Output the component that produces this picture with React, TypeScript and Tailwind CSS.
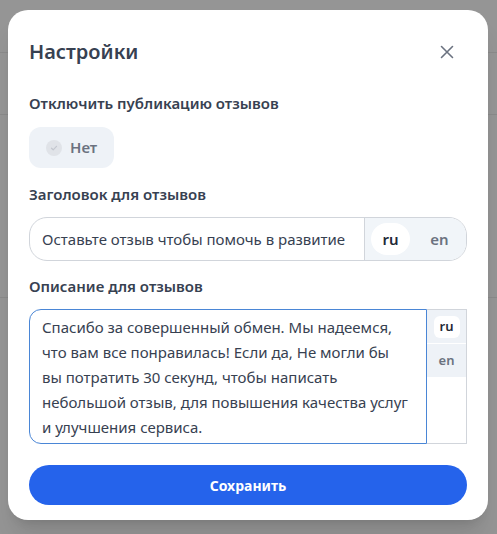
import React from "react";

const font = { fontFamily: '"Noto Sans", "Open Sans", Arial, sans-serif' };

export default function App() {
  const lines = [
    "Спасибо за совершенный обмен. Мы надеемся,",
    "что вам все понравилась! Если да, Не могли бы",
    "вы потратить 30 секунд, чтобы написать",
    "небольшой отзыв, для повышения качества услуг",
    "и улучшения сервиса.",
  ];
  return (
    <div className="relative w-[497px] h-[534px] overflow-hidden bg-[#959595]" style={font}>
      <div className="absolute left-0 right-0 top-[52px] h-px bg-[#8a8a8a]" />
      <div className="absolute left-0 right-0 top-[114px] h-px bg-[#8a8a8a]" />
      <div className="absolute left-0 right-0 top-[297px] h-px bg-[#8a8a8a]" />
      <div className="absolute left-[8px] top-[10px] w-[480px] h-[510px] bg-white rounded-[20px] shadow-xl px-[21px] pt-[28px] flex flex-col">
        <div className="flex items-center justify-between h-[28px]">
          <div className="text-[20px] leading-[28px] font-semibold text-[#374151]">Настройки</div>
          <svg width="14" height="14" viewBox="0 0 14 14" className="mr-[13px]" fill="none" stroke="#6b7280" strokeWidth="1.6" strokeLinecap="round">
            <path d="M1.5 1.5 L12.5 12.5 M12.5 1.5 L1.5 12.5" />
          </svg>
        </div>
        <div className="mt-[27px] text-[15px] leading-[20px] font-semibold text-[#374151]">Отключить публикацию отзывов</div>
        <div className="mt-[14px] w-[85px] h-[41px] rounded-[12px] bg-[#eef2f7] flex items-center pl-[17px] gap-[8px]">
          <div className="w-[16px] h-[16px] rounded-full bg-[#e0e3e8] flex items-center justify-center">
            <svg width="8" height="8" viewBox="0 0 8 8" fill="none" stroke="#c3c7cf" strokeWidth="1.2" strokeLinecap="round" strokeLinejoin="round">
              <path d="M1.5 4.2 L3.2 5.8 L6.5 2.3" />
            </svg>
          </div>
          <span className="text-[15px] font-semibold text-[#6b7280]">Нет</span>
        </div>
        <div className="mt-[16px] text-[15px] leading-[20px] font-semibold text-[#374151]">Заголовок для отзывов</div>
        <div className="mt-[13px] h-[44px] rounded-[18px] border border-[#d1d5db] flex overflow-hidden">
          <div className="flex-1 flex items-center pl-[12px] text-[15px] text-[#374151]">Оставьте отзыв чтобы помочь в развитие</div>
          <div className="w-[102px] border-l border-[#d1d5db] bg-[#f1f5f9] flex items-center pl-[6px] gap-[10px]">
            <div className="w-[39px] h-[32px] rounded-full bg-white flex items-center justify-center text-[15px] font-semibold text-[#1f2937]">ru</div>
            <div className="w-[39px] h-[32px] rounded-full flex items-center justify-center text-[15px] font-semibold text-[#6b7280]">en</div>
          </div>
        </div>
        <div className="mt-[15px] text-[15px] leading-[20px] font-semibold text-[#374151]">Описание для отзывов</div>
        <div className="mt-[13px] h-[135px] flex">
          <div className="w-[398px] h-[135px] border border-[#4a86d6] rounded-l-[12px] pl-[12px] pt-[5px] text-[15px] leading-[25px] text-[#374151]">
            {lines.map((l) => (
              <div key={l} className="whitespace-nowrap">{l}</div>
            ))}
          </div>
          <div className="w-[40px] h-[135px] border-t border-r border-b border-[#d1d5db] flex flex-col">
            <div className="h-[33px] bg-[#eef2f7] flex items-center justify-center">
              <div className="w-[26px] h-[22px] rounded-[6px] bg-white flex items-center justify-center text-[13px] font-semibold text-[#1f2937]">ru</div>
            </div>
            <div className="h-px bg-white" />
            <div className="h-[33px] bg-[#eef2f7] flex items-center justify-center text-[13px] font-semibold text-[#6b7280]">en</div>
          </div>
        </div>
        <div className="mt-[21px] h-[40px] rounded-full bg-[#2563eb] flex items-center justify-center text-[14px] font-bold text-white">Сохранить</div>
      </div>
    </div>
  );
}
